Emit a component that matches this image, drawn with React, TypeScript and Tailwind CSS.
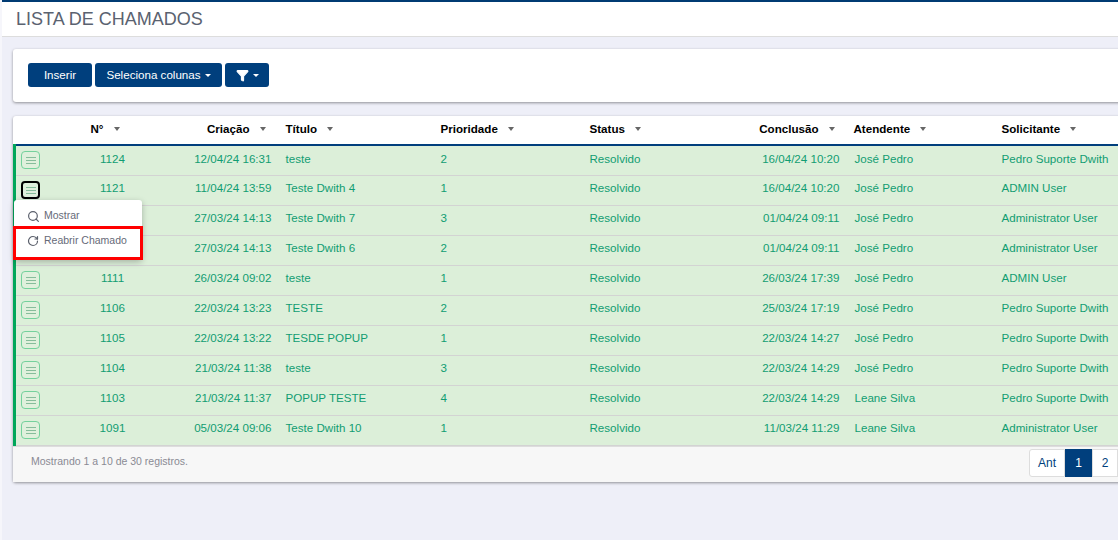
import { Filter, RotateCw, Search } from "lucide-react";

const rows = [
  ["1124", "12/04/24 16:31", "teste", "2", "16/04/24 10:20", "José Pedro", "Pedro Suporte Dwith"],
  ["1121", "11/04/24 13:59", "Teste Dwith 4", "1", "16/04/24 10:20", "José Pedro", "ADMIN User"],
  ["", "27/03/24 14:13", "Teste Dwith 7", "3", "01/04/24 09:11", "José Pedro", "Administrator User"],
  ["", "27/03/24 14:13", "Teste Dwith 6", "2", "01/04/24 09:11", "José Pedro", "Administrator User"],
  ["1111", "26/03/24 09:02", "teste", "1", "26/03/24 17:39", "José Pedro", "ADMIN User"],
  ["1106", "22/03/24 13:23", "TESTE", "2", "25/03/24 17:19", "José Pedro", "Pedro Suporte Dwith"],
  ["1105", "22/03/24 13:22", "TESDE POPUP", "1", "22/03/24 14:27", "José Pedro", "Pedro Suporte Dwith"],
  ["1104", "21/03/24 11:38", "teste", "3", "22/03/24 14:29", "José Pedro", "Pedro Suporte Dwith"],
  ["1103", "21/03/24 11:37", "POPUP TESTE", "4", "22/03/24 14:29", "Leane Silva", "Pedro Suporte Dwith"],
  ["1091", "05/03/24 09:06", "Teste Dwith 10", "1", "11/03/24 11:29", "Leane Silva", "Administrator User"],
];

function Caret({ className }: { className?: string }) {
  return <span className={"inline-block w-0 h-0 border-x-[3.5px] border-x-transparent border-t-[4px] border-t-[#666] " + (className ?? "")} />;
}

function MenuButton({ active }: { active: boolean }) {
  return (
    <button
      className={
        "flex items-center justify-center w-[19px] h-[18px] rounded-[4px] bg-[#dff0dc] " +
        (active ? "border-2 border-black" : "border border-[#74d19c]")
      }
    >
      <span className="flex flex-col gap-[2px] w-[10px]">
        <span className="h-px bg-[#86bd9b]" />
        <span className="h-px bg-[#86bd9b]" />
        <span className="h-px bg-[#86bd9b]" />
      </span>
    </button>
  );
}

function HeaderCell({ label, className }: { label: string; className: string }) {
  return (
    <th className={"font-bold text-[11.6px] text-black p-0 pb-[2px] " + className}>
      <span className="inline-flex items-center">
        {label}
        <Caret className="ml-[10px]" />
      </span>
    </th>
  );
}

export default function App() {
  return (
    <div className="h-[540px] overflow-hidden bg-[#eeeff8] border-l-2 border-l-[#f6f6fb] font-['Liberation_Sans',Arial,sans-serif] text-[11.6px]">
      <div className="h-[37px] bg-white border-t-2 border-t-[#003b73] border-b border-b-[#dddddd] pl-[14px] flex items-center">
        <h1 className="text-[18px] leading-none text-[#5a6270] pb-px">LISTA DE CHAMADOS</h1>
      </div>

      <div className="ml-[11px] mt-[12px] w-[1200px] h-[53px] bg-white rounded-[3px] shadow-[0_1px_3px_rgba(0,0,0,0.4)] pl-[15px] pt-[14px] flex gap-[3px] items-start">
        <button className="h-[24px] w-[64px] rounded-[3px] bg-[#003f7d] text-white">Inserir</button>
        <button className="h-[24px] w-[127px] rounded-[3px] bg-[#003f7d] text-white flex items-center justify-center gap-[4px]">
          Seleciona colunas
          <span className="w-0 h-0 border-x-[3px] border-x-transparent border-t-[3px] border-t-white" />
        </button>
        <button className="h-[24px] w-[44px] rounded-[3px] bg-[#003f7d] text-white flex items-center justify-center gap-[4px]">
          <Filter size={13} fill="white" stroke="white" />
          <span className="w-0 h-0 border-x-[3px] border-x-transparent border-t-[3px] border-t-white" />
        </button>
      </div>

      <div className="relative ml-[11px] mt-[14px] w-[1200px] h-[366px] bg-white rounded-[3px] shadow-[0_1px_3px_rgba(0,0,0,0.4)]">
        <table className="table-fixed border-collapse w-[1105px]">
          <colgroup>
            <col className="w-[42px]" />
            <col className="w-[115px]" />
            <col className="w-[108px]" />
            <col className="w-[155px]" />
            <col className="w-[149px]" />
            <col className="w-[118px]" />
            <col className="w-[147px]" />
            <col className="w-[148px]" />
            <col className="w-[123px]" />
          </colgroup>
          <thead>
            <tr className="h-[29px] border-b-[2px] border-b-[#003f7d]">
              <th />
              <HeaderCell label="N°" className="text-left pl-[34px]" />
              <HeaderCell label="Criação" className="text-right pr-[14px]" />
              <HeaderCell label="Título" className="text-left pl-[6px]" />
              <HeaderCell label="Prioridade" className="text-left pl-[6px]" />
              <HeaderCell label="Status" className="text-left pl-[6px]" />
              <HeaderCell label="Conclusão" className="text-right pr-[14px]" />
              <HeaderCell label="Atendente" className="text-left pl-[5px]" />
              <HeaderCell label="Solicitante" className="text-left pl-[5px]" />
            </tr>
          </thead>
          <tbody>
            {rows.map((r, i) => (
              <tr key={i} className="h-[30px] bg-[#dcefd9] border-b border-b-[#d3d3d3] text-[#119d72]">
                <td className="border-l-[3px] border-l-[#00a65a] pl-[5px]">
                  <MenuButton active={i === 1} />
                </td>
                <td className="text-center pr-[3px] pb-[4px]">{r[0]}</td>
                <td className="text-right pr-[8px] pb-[4px]">{r[1]}</td>
                <td className="pl-[6px] pb-[4px]">{r[2]}</td>
                <td className="pl-[6px] pb-[4px]">{r[3]}</td>
                <td className="pl-[6px] pb-[4px]">Resolvido</td>
                <td className="text-right pr-[9px] pb-[4px]">{r[4]}</td>
                <td className="pl-[6px] pb-[4px]">{r[5]}</td>
                <td className="pl-[5px] pb-[4px]">{r[6]}</td>
              </tr>
            ))}
          </tbody>
        </table>

        <div className="h-[36px] bg-[#f7f7f7] border-t border-t-[#dddddd] flex items-start pl-[18px] pt-[7px] text-[10.5px] text-[#8a8a94]">
          Mostrando 1 a 10 de 30 registros.
        </div>

        <div className="absolute left-[1016px] top-[333px] flex h-[28px] text-[12px] text-[#003f7d]">
          <span className="w-[36px] flex items-center justify-center bg-white border border-[#dddddd] rounded-l-[3px]">Ant</span>
          <span className="w-[27px] flex items-center justify-center bg-[#003f7d] text-white">1</span>
          <span className="w-[26px] flex items-center justify-center bg-white border border-[#dddddd]">2</span>
        </div>

        <div className="absolute left-[1px] top-[84px] w-[128px] h-[60px] bg-white rounded-[3px] shadow-[0_2px_6px_rgba(0,0,0,0.25)] text-[10.5px] text-[#666a78]">
          <div className="h-[26px] flex items-center pl-[13px] pt-[6px] gap-[4px]">
            <Search size={13} strokeWidth={2.2} className="text-[#5a5f6b]" />
            Mostrar
          </div>
          <div className="h-[34px] flex items-center pb-[4px] gap-[5px] border-[3px] border-[#ff0000] -mx-px pl-[11px]">
            <RotateCw size={12} strokeWidth={2.4} className="text-[#5a5f6b]" />
            Reabrir Chamado
          </div>
        </div>
      </div>
    </div>
  );
}
